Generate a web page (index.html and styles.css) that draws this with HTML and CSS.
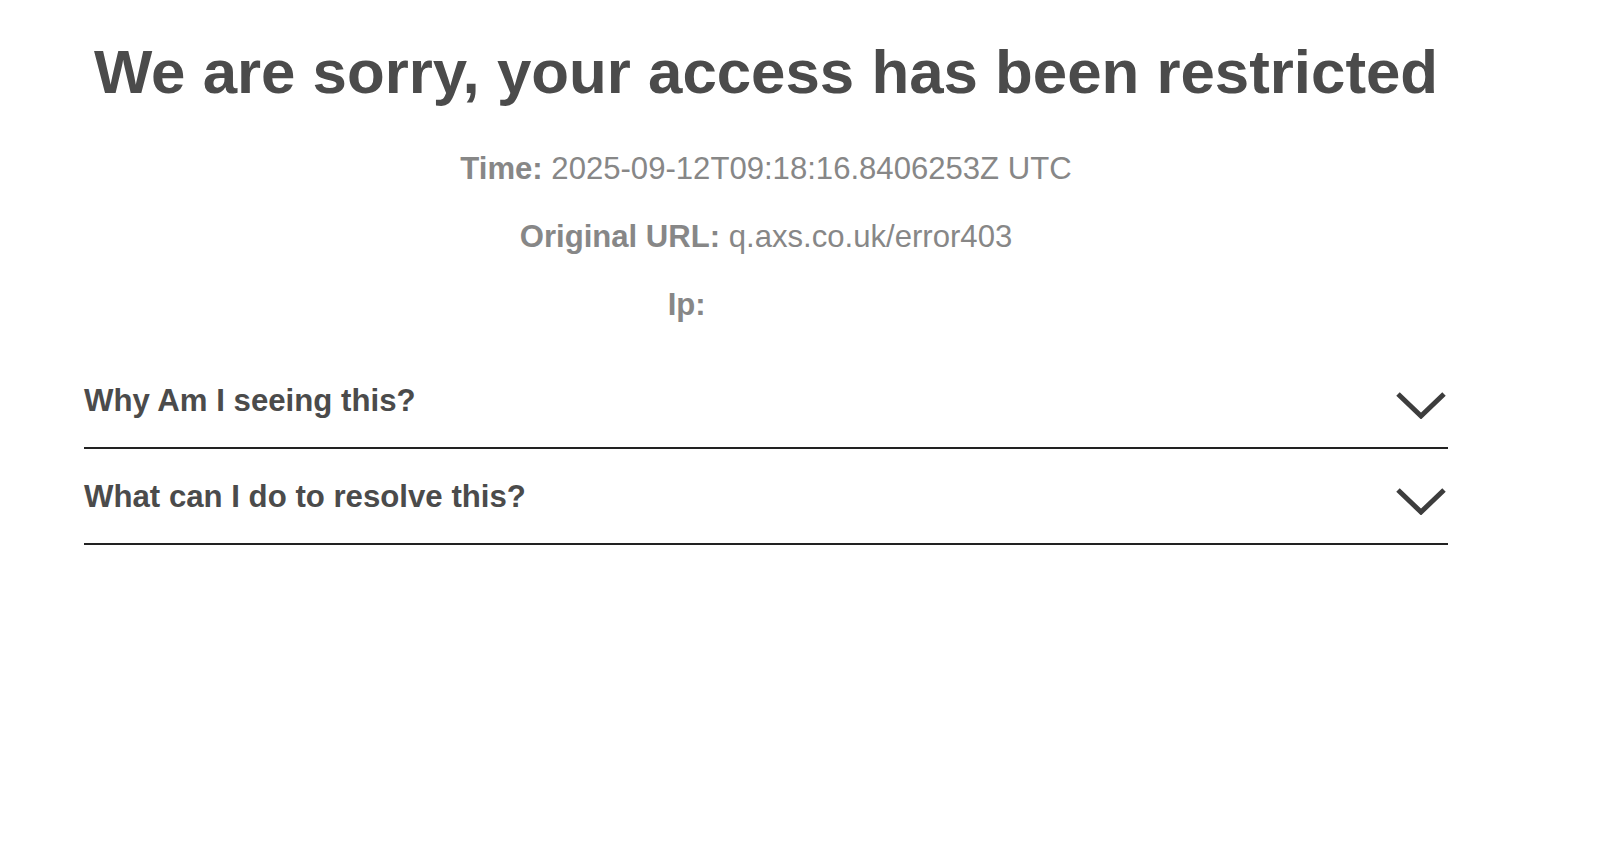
FILE: index.html
```html
<!DOCTYPE html>
<html lang="en">
<head>
<meta charset="utf-8">
<title>Access restricted</title>
<link rel="stylesheet" href="styles.css">
</head>
<body>
<main class="page">
  <h1 class="title">We are sorry, your access has been restricted</h1>
  <div class="info">
    <p class="info-line"><b>Time:</b> 2025-09-12T09:18:16.8406253Z UTC</p>
    <p class="info-line"><b>Original URL:</b> q.axs.co.uk/error403</p>
    <p class="info-line"><b>Ip:</b> <span class="ip-value"></span></p>
  </div>
  <section class="accordion">
    <div class="acc-row">
      <span class="acc-title">Why Am I seeing this?</span>
      <svg class="chevron" viewBox="0 0 50 28" width="50" height="28"><path d="M2 3 L25 25 L48 3" fill="none" stroke="#3d3d3d" stroke-width="5"/></svg>
    </div>
    <div class="acc-row">
      <span class="acc-title">What can I do to resolve this?</span>
      <svg class="chevron" viewBox="0 0 50 28" width="50" height="28"><path d="M2 3 L25 25 L48 3" fill="none" stroke="#3d3d3d" stroke-width="5"/></svg>
    </div>
  </section>
</main>
</body>
</html>
```
FILE: styles.css
```css
html, body {
  margin: 0;
  padding: 0;
  background: #fff;
}
body {
  font-family: "Liberation Sans", Arial, Helvetica, sans-serif;
}
.page {
  margin-left: 84px;
  width: 1364px;
  padding-top: 30px;
}
.title {
  margin: 0;
  text-align: center;
  font-size: 61.8px;
  line-height: 84px;
  font-weight: bold;
  color: #4b4b4b;
}
.info {
  margin-top: 21px;
  text-align: center;
  color: #878787;
  font-size: 31.1px;
}
.info-line {
  margin: 0;
  line-height: 68px;
}
.info-line b {
  font-weight: bold;
}
.ip-value {
  display: inline-block;
  width: 150px;
}
.accordion {
  margin-top: 14px;
}
.acc-row {
  display: flex;
  justify-content: space-between;
  align-items: center;
  height: 94px;
  border-bottom: 2px solid #222;
}
.acc-title {
  font-size: 31.2px;
  font-weight: bold;
  color: #4b4b4b;
  margin-top: 2px;
}
.chevron {
  display: block;
  margin-right: 2px;
  margin-top: 10px;
}
```
